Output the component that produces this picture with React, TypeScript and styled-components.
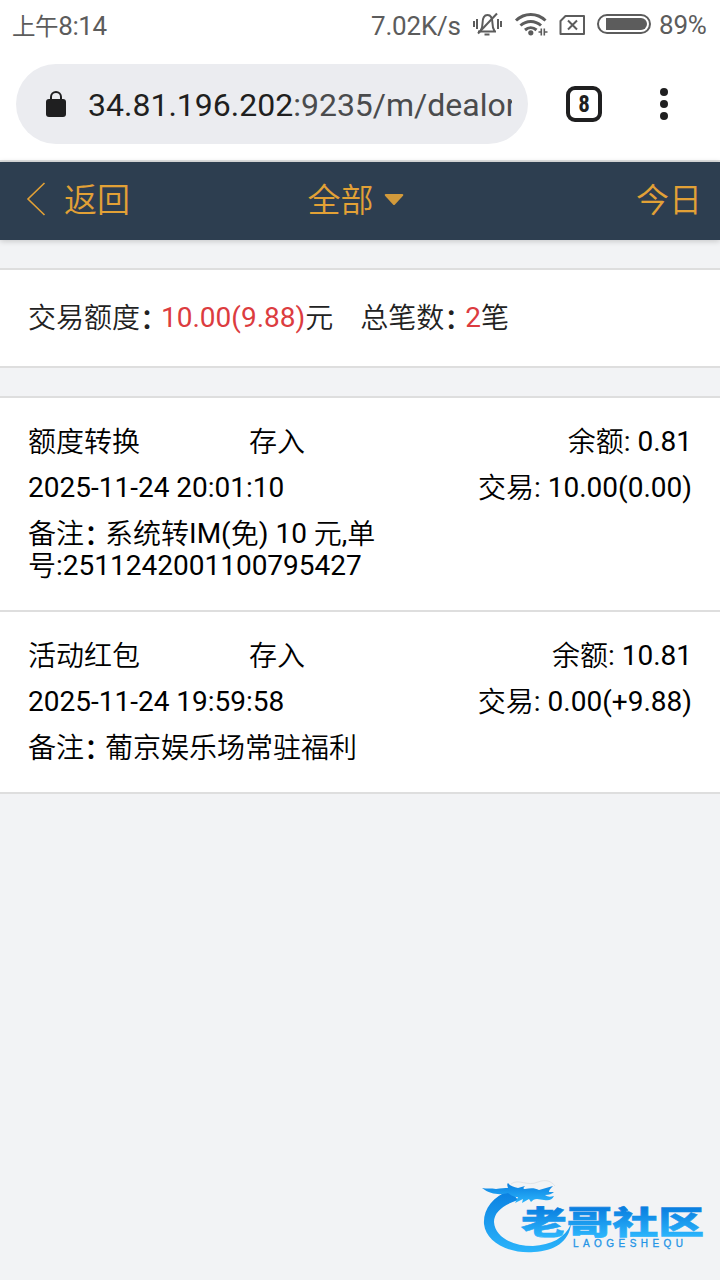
import React from 'react'
import styled, { createGlobalStyle } from 'styled-components'

const GlobalStyle = createGlobalStyle`
    * {
        box-sizing: border-box;
    }
    body {
        margin: 0;
        background-color: #f2f3f5;
        font-family: Roboto, 'Noto Sans CJK SC', sans-serif;
    }
`
const Page = styled.div`
    display: flex;
    flex-direction: column;
    min-height: 1280px;
    width: 720px;
    overflow: hidden;
`
const StatusBar = styled.div`
    display: flex;
    align-items: center;
    height: 48px;
    padding: 4px 12px 0 12px;
    background-color: #fff;
    color: #5c5c5c;
    font-size: 26px;
    line-height: 44px;
    white-space: nowrap;
`
const Clock = styled.div`
    flex: 1;
    letter-spacing: -0.4px;
`
const DayPart = styled.span`
    font-size: 23.5px;
    line-height: 0;
`
const NetSpeed = styled.div`
    width: 90px;
    margin-right: 12px;
    letter-spacing: -0.2px;
`
const StatusIcons = styled.svg`
    display: block;
    margin: -4px 8px 0 0;
`
const Battery = styled.div`
    width: 49px;
    font-size: 26px;
    letter-spacing: -0.2px;
    margin-top: -2px;
`
const BrowserBar = styled.div`
    display: flex;
    align-items: center;
    height: 114px;
    padding: 0 16px;
    border-bottom: 2px solid #dfe1e1;
    background-color: #fff;
`
const AddressField = styled.div`
    display: flex;
    align-items: center;
    width: 512px;
    height: 80px;
    padding: 0 16px 0 30px;
    border-radius: 40px;
    background-color: #ebecf0;
`
const LockIcon = styled.svg`
    flex: none;
    margin-right: 22px;
`
const Address = styled.div`
    flex: 1;
    overflow: hidden;
    color: #4a4b4d;
    font-size: 32px;
    line-height: 44px;
    padding-top: 2px;
    white-space: nowrap;
`
const Host = styled.span`
    color: #1f1f20;
`
const TabCount = styled.div`
    width: 36px;
    height: 36px;
    margin-left: 38px;
    border: 4px solid #1f1f20;
    border-radius: 9px;
    color: #1f1f20;
    font-family: 'Roboto Condensed', Roboto, sans-serif;
    font-size: 23px;
    font-weight: 700;
    line-height: 29px;
    text-align: center;
`
const MenuIcon = styled.svg`
    margin-left: 57px;
`
const NavBar = styled.div`
    position: relative;
    display: grid;
    grid-template-columns: 1fr auto 1fr;
    align-items: center;
    height: 78px;
    padding: 0 18px 4px 26px;
    background-color: #2d3e50;
    box-shadow: 0 1px 6px rgba(0, 0, 0, 0.2);
    color: #e2a136;
    font-size: 33px;
    line-height: 48px;
`
const NavItem = styled.div<{ $align?: string }>`
    display: flex;
    align-items: center;
    justify-content: ${p => p.$align || 'flex-start'};
`
const NavLabel = styled.div`
    margin-top: -3px;
    font-family: 'Noto Sans CJK SC', sans-serif;
    font-weight: 350;
`
const Filter = styled(NavItem)`
    margin-right: 17px;
`
const BackIcon = styled.svg`
    margin-right: 18px;
`
const CaretIcon = styled.svg`
    margin: 2px 0 0 10px;
`
const Panel = styled.div`
    margin-top: 28px;
    border-top: 2px solid #dedede;
    background-color: #fff;
    color: #000;
    font-size: 28px;
    line-height: 32px;
`
const Summary = styled.div`
    display: flex;
    height: 98px;
    padding: 32px 28px 0;
    border-bottom: 2px solid #dedede;
    color: #222;
`
const Total = styled.div`
    margin-right: 27px;
`
const Amount = styled.span`
    color: #dc3c3f;
`
const Record = styled.div`
    display: flex;
    flex-direction: column;
    row-gap: 14px;
    padding: 28px 28px 28px;
    border-bottom: 2px solid #dedede;
`
const RecordLine = styled.div`
    display: flex;
`
const RecordType = styled.div`
    width: 221px;
`
const RecordKind = styled.div`
    white-space: nowrap;
`
const RecordValue = styled.div`
    margin-left: auto;
`
const Remark = styled.div`
    width: 360px;
    overflow-wrap: anywhere;
`
const Han = styled.span`
    font-weight: 350;
    font-family: 'Noto Sans CJK SC', sans-serif;
    line-height: 0;
    vertical-align: -1px;
`
const Colon = styled.span`
    display: inline-block;
    width: 21px;
    font-weight: 500;
    font-family: 'Noto Sans CJK SC', sans-serif;
    font-feature-settings: 'halt';
    line-height: 0;
    vertical-align: -2px;
`
const Watermark = styled.svg`
    position: absolute;
    left: 476px;
    top: 1176px;
`

type TRecord = {
    name: string
    type: string
    time: string
    balance: string
    deal: string
    remark: string
}

const records: TRecord[] = [
    {
        name: '额度转换',
        type: '存入',
        time: '2025-11-24 20:01:10',
        balance: '0.81',
        deal: '10.00(0.00)',
        remark: '系统转IM(免) 10 元,单号:2511242001100795427',
    },
    {
        name: '活动红包',
        type: '存入',
        time: '2025-11-24 19:59:58',
        balance: '10.81',
        deal: '0.00(+9.88)',
        remark: '葡京娱乐场常驻福利',
    },
]

// Chinese runs are set lighter than the digits around them
const Mixed = ({ text }: { text: string }) => (
    <>
        {
            text.split(/([\u4e00-\u9fff]+|：)/).filter(Boolean).map((part, i) => {
                if (part === '：') return <Colon key={i}>{part}</Colon>
                if (/[\u4e00-\u9fff]/.test(part)) return <Han key={i}>{part}</Han>
                return <React.Fragment key={i}>{part}</React.Fragment>
            })
        }
    </>
)

const App = () => (
    <Page>
        <GlobalStyle />
        <StatusBar>
            <Clock><DayPart>{'上午'}</DayPart>{'8:14'}</Clock>
            <NetSpeed>{'7.02K/s'}</NetSpeed>
            <StatusIcons width="178" height="28" viewBox="0 0 178 28" fill="none" stroke="#5c5c5c" strokeWidth="2">
                {/* muted bell */}
                <path d="M5 21.500h18M7.500 21c1.500-2 2-4 2-7.500 0-5.500 1.500-8.500 5-8.500s5 3 5 8.500c0 3.500.5 5.500 2 7.500" />
                <path d="M5 23.500 24 3.500" />
                <path d="M11.500 24.500h5" />
                <path d="M1 11v6M4 9v10M25 9v10M28 11v6" strokeWidth="2" />
                {/* wifi */}
                <path d="M43 10.500c8.500-8 21-8 29.500 0" strokeWidth="3" />
                <path d="M47.500 15.500c6-5.500 14.500-5.500 20.500 0" strokeWidth="3" />
                <path d="M52 20c3.500-3 8-3 11.500 0" strokeWidth="3" />
                <circle cx="57.800" cy="22.800" r="2.600" fill="#5c5c5c" stroke="none" />
                <path d="M68.300 18.500v7M71.300 18.500v7M65.500 22h2M72 22h2.500" strokeWidth="1.600" />
                {/* sim */}
                <path d="M92.500 6H111v18H87.500V11z" strokeWidth="2" strokeLinejoin="round" />
                <path d="m95 10.500 9 9M104 10.500l-9 9" strokeWidth="2" />
                {/* battery */}
                <rect x="125" y="5" width="52" height="18" rx="9" strokeWidth="2" />
                <path d="M133 8h35a6 6 0 0 1 0 12h-35z" fill="#5c5c5c" stroke="none" />
            </StatusIcons>
            <Battery>{'89%'}</Battery>
        </StatusBar>
        <BrowserBar>
            <AddressField>
                <LockIcon width="20" height="28" viewBox="0 0 20 28">
                    <path d="M5 11V7a5 5 0 0 1 10 0v4" fill="none" stroke="#1f1f20" strokeWidth="2" />
                    <rect y="9" width="20" height="18" rx="3" fill="#1f1f20" />
                </LockIcon>
                <Address><Host>{'34.81.196.202'}</Host>{':9235/m/dealor'}</Address>
            </AddressField>
            <TabCount>{'8'}</TabCount>
            <MenuIcon width="10" height="34" viewBox="0 0 10 34" fill="#1f1f20">
                <circle cx="5" cy="5" r="4" />
                <circle cx="5" cy="17" r="4" />
                <circle cx="5" cy="29" r="4" />
            </MenuIcon>
        </BrowserBar>
        <NavBar>
            <NavItem>
                <BackIcon width="20" height="34" viewBox="0 0 20 34" fill="none" stroke="#e2a136" strokeWidth="1.600">
                    <path d="M18.500 1 2 17l16.500 16" />
                </BackIcon>
                <NavLabel>{'返回'}</NavLabel>
            </NavItem>
            <Filter>
                <NavLabel>{'全部'}</NavLabel>
                <CaretIcon width="20" height="12" viewBox="0 0 20 12" fill="#d29a3b">
                    <path d="M1.500 0h17q1.500.5.5 1.800L11 10.500q-1 1-2 0L1 1.800Q0 .5 1.500 0z" />
                </CaretIcon>
            </Filter>
            <NavItem $align="flex-end">
                <NavLabel>{'今日'}</NavLabel>
            </NavItem>
        </NavBar>
        <Panel>
            <Summary>
                <Total><Mixed text="交易额度：" /><Amount>{'10.00(9.88)'}</Amount><Mixed text="元" /></Total>
                <Total><Mixed text="总笔数：" /><Amount>{'2'}</Amount><Mixed text="笔" /></Total>
            </Summary>
        </Panel>
        <Panel>
            {
                records.map(r => (
                    <Record key={r.time}>
                        <RecordLine>
                            <RecordType><Mixed text={r.name} /></RecordType>
                            <RecordKind><Mixed text={r.type} /></RecordKind>
                            <RecordValue><Mixed text={`余额: ${r.balance}`} /></RecordValue>
                        </RecordLine>
                        <RecordLine>
                            {r.time}
                            <RecordValue><Mixed text={`交易: ${r.deal}`} /></RecordValue>
                        </RecordLine>
                        <Remark><Mixed text={`备注：${r.remark}`} /></Remark>
                    </Record>
                ))
            }
        </Panel>
        <Watermark width="236" height="84" viewBox="0 0 236 84">
            <defs>
                <linearGradient id="ring" x1="0" y1="0" x2="0" y2="1">
                    <stop offset="0" stopColor="#0a7fe0" />
                    <stop offset="1" stopColor="#2bb4fb" />
                </linearGradient>
                <linearGradient id="word" x1="0" y1="0" x2="0" y2="1">
                    <stop offset="0.250" stopColor="#0a7fe0" />
                    <stop offset="0.850" stopColor="#2bb4fb" />
                </linearGradient>
            </defs>
            <g fill="url(#ring)">
                {/* body of the dragon */}
                <path d="M34 14C16 21 7 34 8 48c2 18 24 30 50 28 20-1 35-10 37-28-6 14-20 21-38 22-21 0-38-9-39-24C18 36 27 29 42 24z" />
                {/* head, horns and whiskers */}
                <path d="M6 12c5 1 9 0 14 1 5-1 9-1 12-1-1-3-1-4 0-5 2 3 6 4 10 5l7-2c-2 2-2 3 0 3 6-1 10-1 14 1l14-4c-3 3-4 4-4 6h5c-2 2-5 3-9 3 3 2 5 2 9 1-2 4-5 5-10 4l-7-1c-3 0-4 1-6 3l-2-3-7 4 1-4-8 4 3-6c-5 0-7-2-10-4-7 2-17 2-26-5z" />
            </g>
            <path d="M35 8C43 2 51 11 62 6c8-3 13-1 17 4" fill="none" stroke="#e2e4e7" strokeWidth="1" />
            <text transform="translate(45 58) scale(1.430 1)" fill="url(#word)" stroke="url(#word)" strokeWidth="0.600" fontFamily="'Noto Sans CJK SC', sans-serif" fontWeight="900" fontSize="32">{'老哥社区'}</text>
            <text x="97" y="71" fill="#2494e6" stroke="#2494e6" strokeWidth="0.300" fontFamily="'Liberation Sans', sans-serif" fontSize="10" textLength="110">{'LAOGESHEQU'}</text>
        </Watermark>
    </Page>
)

export default App
